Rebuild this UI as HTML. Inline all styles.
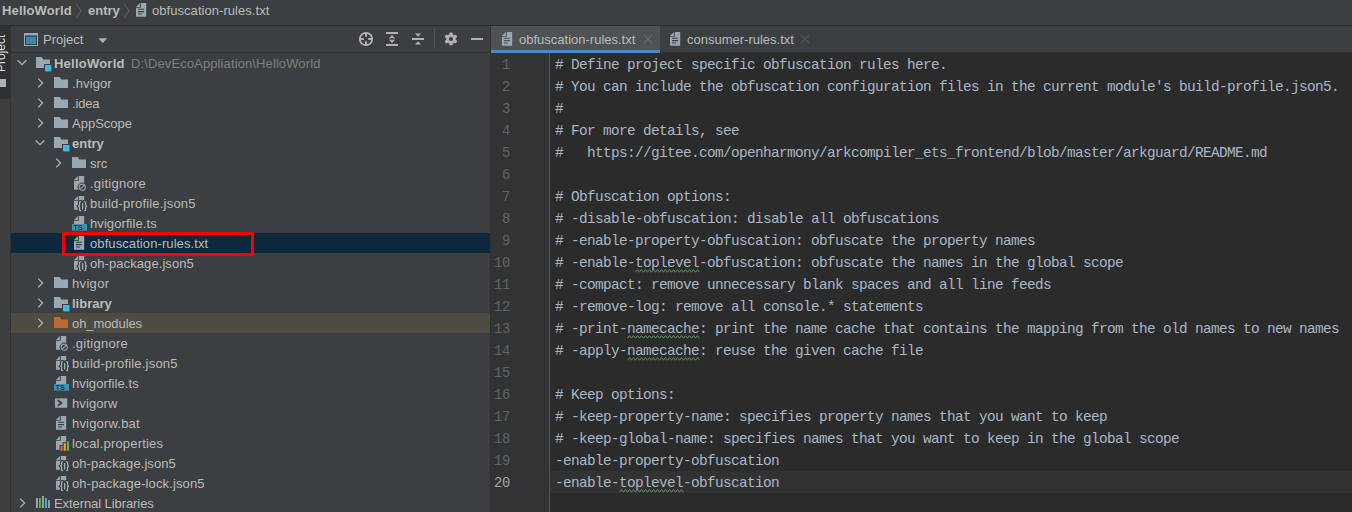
<!DOCTYPE html>
<html>
<head>
<meta charset="utf-8">
<title>obfuscation-rules.txt</title>
<style>
*{box-sizing:border-box;margin:0;padding:0}
html,body{width:1352px;height:512px;overflow:hidden;background:#3c3f41}
body{position:relative;font-family:"Liberation Sans",sans-serif;font-size:13px;color:#bbbbbb}
.abs{position:absolute}
#crumb{left:0;top:0;width:1352px;height:26px;background:#3c3f41;border-bottom:1px solid #2b2b2b}
#crumb span{position:absolute;top:0px;line-height:22px;white-space:nowrap}
#stripe{left:0;top:26px;width:11px;height:486px;background:#3c3f41;border-right:1px solid #323232;overflow:hidden}
#ptool{left:11px;top:26px;width:479px;height:27px;background:#3c3f41;border-bottom:1px solid #2f3133}
#tree{left:11px;top:53px;width:479px;height:459px;background:#3c3f41}
.row{position:absolute;left:0;width:479px;height:20px;line-height:20px;white-space:nowrap}
.row .t{position:absolute;top:1px}
.row svg{position:absolute}
.b{font-weight:bold}
.sel{background:#0d293e}
.excl{background:#4f4b41}
#tabs{left:490px;top:26px;width:862px;height:27px;background:#3c3f41;border-left:1px solid #323232;border-bottom:1px solid #323232}
#gutter{left:490px;top:53px;width:60px;border-left:1px solid #2d2f31;height:459px;background:#313335;border-right:1px solid #555555}
#edit{left:550px;top:53px;width:802px;height:459px;background:#2b2b2b}
.ln{position:absolute;left:0;width:59px;margin-top:2px;height:22px;line-height:22px;font-size:13.8px;letter-spacing:-0.28px;color:#606366;font-family:"Liberation Mono",monospace}
.cl{position:absolute;left:5px;height:22px;line-height:22px;font-size:14.4px;letter-spacing:-0.6359px;color:#a9b7c6;font-family:"Liberation Mono",monospace;white-space:pre}
</style>
</head>
<body>
<div id="crumb" class="abs">
<span class="b" style="left:2px;letter-spacing:0.14px">HelloWorld</span>
<svg class="abs" style="left:75px;top:3px" width="8" height="16" viewBox="0 0 8 16"><path d="M1.2 0.6 L6 7.8 L1.2 15" fill="none" stroke="#5e6163" stroke-width="1"/></svg>
<span class="b" style="left:88px">entry</span>
<svg class="abs" style="left:123px;top:3px" width="8" height="16" viewBox="0 0 8 16"><path d="M1.2 0.6 L6 7.8 L1.2 15" fill="none" stroke="#5e6163" stroke-width="1"/></svg>
<svg class="abs" style="left:136px;top:3px" width="16" height="16" viewBox="0 0 16 16"><path d="M4.8 0 H10.2 V13.8 H0 V4.8 H4.8 Z" fill="#9aa7b0" /><path d="M3.9 0 V3.9 H0 Z" fill="#9aa7b0"/><path d="M2 6.2 H8 M2 8.6 H8 M2 11 H6" stroke="#3c3f41" stroke-width="1.1" fill="none"/></svg>
<span style="left:152px;letter-spacing:0.05px">obfuscation-rules.txt</span>
</div>
<div id="stripe" class="abs">
<div class="abs" style="left:0;top:0;width:10px;height:73px;background:#2e3032"></div>
<div class="abs" style="left:-29px;top:9px;width:60px;height:14px;line-height:14px;transform:rotate(-90deg);transform-origin:center;color:#dddddd;font-size:12px;white-space:nowrap;text-align:left">Project</div>
<div class="abs" style="left:0;top:53px;width:6px;height:8px;background:#aab3ba"></div>
</div>
<div id="ptool" class="abs">
<svg class="abs" style="left:13px;top:7px" width="16" height="14" viewBox="0 0 16 14"><rect x="0.5" y="0.5" width="13" height="12" fill="#3c3f41" stroke="#9aa7b0" stroke-width="1"/><rect x="0" y="0" width="14" height="2.4" fill="#9aa7b0"/><rect x="2" y="3.8" width="10" height="7.2" fill="#3987aa"/></svg>
<span class="abs" style="left:32px;top:0;line-height:28px">Project</span>
<svg class="abs" style="left:87px;top:12px" width="10" height="6" viewBox="0 0 10 6"><path d="M0.4 0.3 H9.2 L4.8 5 Z" fill="#afb1b3"/></svg>
<svg class="abs" style="left:347px;top:5px" width="16" height="16" viewBox="0 0 16 16"><circle cx="8" cy="8" r="6.2" fill="none" stroke="#afb1b3" stroke-width="1.8"/><path d="M8 1 V5.8 M8 10.2 V15 M1 8 H5.8 M10.2 8 H15" stroke="#afb1b3" stroke-width="2"/></svg>
<svg class="abs" style="left:373px;top:5px" width="16" height="16" viewBox="0 0 16 16"><path d="M2 2 H14 M2 14 H14" stroke="#afb1b3" stroke-width="2"/><path d="M5 7.2 L8 4 L11 7.2 Z M5 8.8 L8 12 L11 8.8 Z" fill="#afb1b3"/></svg>
<svg class="abs" style="left:399px;top:5px" width="16" height="16" viewBox="0 0 16 16"><path d="M2 8 H14" stroke="#afb1b3" stroke-width="2"/><path d="M5 2.4 L8 5.8 L11 2.4 Z M5 13.6 L8 10.2 L11 13.6 Z" fill="#afb1b3"/></svg>
<div class="abs" style="left:423px;top:3px;width:1px;height:20px;background:#515456"></div>
<svg class="abs" style="left:432px;top:5px" width="16" height="16" viewBox="0 0 16 16"><g fill="#afb1b3"><circle cx="8" cy="8" r="4.8"/><rect x="6.4" y="1.5" width="3.2" height="13" rx="0.8"/><rect x="6.4" y="1.5" width="3.2" height="13" rx="0.8" transform="rotate(60 8 8)"/><rect x="6.4" y="1.5" width="3.2" height="13" rx="0.8" transform="rotate(120 8 8)"/></g><circle cx="8" cy="8" r="2.1" fill="#3c3f41"/></svg>
<div class="abs" style="left:460px;top:12px;width:12px;height:2px;background:#afb1b3"></div>
</div>
<div id="tree" class="abs">
<div class="row " style="top:0px"><svg style="left:5.300000000000001px;top:4px" width="12" height="11" viewBox="0 0 12 11"><path d="M1.6 3.2 L6 7.6 L10.4 3.2" fill="none" stroke="#afb1b3" stroke-width="1.3"/></svg><svg style="left:25px;top:4px" width="16" height="16" viewBox="0 0 16 16"><path d="M0 0 H5.6 L7.4 2.6 H14 V7 H8 V11 H0 Z" fill="#9aa7b0"/><rect x="9" y="8" width="6.4" height="6.4" fill="#40b6e0"/></svg><span class="t b" style="left:43px;letter-spacing:0.23px">HelloWorld</span><span class="t" style="left:120px;color:#7e7e7e;letter-spacing:0.11px">D:\DevEcoAppliation\HelloWorld</span></div>
<div class="row " style="top:20px"><svg style="left:23.799999999999997px;top:4px" width="11" height="12" viewBox="0 0 11 12"><path d="M3.2 1.6 L7.6 6 L3.2 10.4" fill="none" stroke="#afb1b3" stroke-width="1.3"/></svg><svg style="left:43px;top:4px" width="16" height="16" viewBox="0 0 16 16"><path d="M0 0 H5.6 L7.4 2.6 H14 V11 H0 Z" fill="#9aa7b0"/></svg><span class="t" style="left:61px;letter-spacing:0.1px">.hvigor</span></div>
<div class="row " style="top:40px"><svg style="left:23.799999999999997px;top:4px" width="11" height="12" viewBox="0 0 11 12"><path d="M3.2 1.6 L7.6 6 L3.2 10.4" fill="none" stroke="#afb1b3" stroke-width="1.3"/></svg><svg style="left:43px;top:4px" width="16" height="16" viewBox="0 0 16 16"><path d="M0 0 H5.6 L7.4 2.6 H14 V11 H0 Z" fill="#9aa7b0"/></svg><span class="t" style="left:61px;letter-spacing:-0.15px">.idea</span></div>
<div class="row " style="top:60px"><svg style="left:23.799999999999997px;top:4px" width="11" height="12" viewBox="0 0 11 12"><path d="M3.2 1.6 L7.6 6 L3.2 10.4" fill="none" stroke="#afb1b3" stroke-width="1.3"/></svg><svg style="left:43px;top:4px" width="16" height="16" viewBox="0 0 16 16"><path d="M0 0 H5.6 L7.4 2.6 H14 V11 H0 Z" fill="#9aa7b0"/></svg><span class="t" style="left:61px">AppScope</span></div>
<div class="row " style="top:80px"><svg style="left:23.299999999999997px;top:4px" width="12" height="11" viewBox="0 0 12 11"><path d="M1.6 3.2 L6 7.6 L10.4 3.2" fill="none" stroke="#afb1b3" stroke-width="1.3"/></svg><svg style="left:43px;top:4px" width="16" height="16" viewBox="0 0 16 16"><path d="M0 0 H5.6 L7.4 2.6 H14 V7 H8 V11 H0 Z" fill="#9aa7b0"/><rect x="9" y="8" width="6.4" height="6.4" fill="#40b6e0"/></svg><span class="t b" style="left:61px">entry</span></div>
<div class="row " style="top:100px"><svg style="left:41.8px;top:4px" width="11" height="12" viewBox="0 0 11 12"><path d="M3.2 1.6 L7.6 6 L3.2 10.4" fill="none" stroke="#afb1b3" stroke-width="1.3"/></svg><svg style="left:61px;top:4px" width="16" height="16" viewBox="0 0 16 16"><path d="M0 0 H5.6 L7.4 2.6 H14 V11 H0 Z" fill="#9aa7b0"/></svg><span class="t" style="left:79px">src</span></div>
<div class="row " style="top:120px"><svg style="left:63px;top:3px" width="16" height="16" viewBox="0 0 16 16"><path d="M4.8 0 H10.2 V13.8 H0 V4.8 H4.8 Z" fill="#9aa7b0" /><path d="M3.9 0 V3.9 H0 Z" fill="#9aa7b0"/><circle cx="8.2" cy="11.2" r="4.6" fill="#3c3f41"/><circle cx="8.2" cy="11.2" r="3.1" fill="none" stroke="#9aa7b0" stroke-width="1.1"/><path d="M6.1 13.3 L10.3 9.1" stroke="#9aa7b0" stroke-width="1.1"/></svg><span class="t" style="left:79px;letter-spacing:0.25px">.gitignore</span></div>
<div class="row " style="top:140px"><svg style="left:63px;top:3px" width="16" height="16" viewBox="0 0 16 16"><path d="M4.8 0 H10.2 V13.8 H0 V4.8 H4.8 Z" fill="#9aa7b0" /><path d="M3.9 0 V3.9 H0 Z" fill="#9aa7b0"/><path d="M7 5.6 H6.5 Q5.6 5.6 5.6 6.5 V9 Q5.6 10.1 4.2 10.1 Q5.6 10.1 5.6 11.2 V13.7 Q5.6 14.6 6.5 14.6 H7 M10.2 5.6 H10.7 Q11.6 5.6 11.6 6.5 V9 Q11.6 10.1 13 10.1 Q11.6 10.1 11.6 11.2 V13.7 Q11.6 14.6 10.7 14.6 H10.2" fill="none" stroke="#3c3f41" stroke-width="3.4" stroke-linejoin="round" stroke-linecap="round"/><rect x="6" y="4.6" width="5.2" height="11" fill="#3c3f41"/><path d="M7 5.6 H6.5 Q5.6 5.6 5.6 6.5 V9 Q5.6 10.1 4.2 10.1 Q5.6 10.1 5.6 11.2 V13.7 Q5.6 14.6 6.5 14.6 H7 M10.2 5.6 H10.7 Q11.6 5.6 11.6 6.5 V9 Q11.6 10.1 13 10.1 Q11.6 10.1 11.6 11.2 V13.7 Q11.6 14.6 10.7 14.6 H10.2 M8.6 7 V13.4" fill="none" stroke="#a3afb7" stroke-width="1.25"/></svg><span class="t" style="left:79px;letter-spacing:0.2px">build-profile.json5</span></div>
<div class="row " style="top:160px"><svg style="left:61px;top:3px;overflow:visible" width="18" height="16" viewBox="-2 0 18 16"><path d="M4.8 0 H10.2 V13.8 H0 V4.8 H4.8 Z" fill="#9aa7b0" /><path d="M3.9 0 V3.9 H0 Z" fill="#9aa7b0"/><rect x="-2" y="8" width="15" height="6.6" fill="#3b93b8"/><text x="4.2" y="13.9" font-family="Liberation Sans, sans-serif" font-size="7.2" font-weight="bold" fill="#1f343f" text-anchor="middle">TS</text></svg><span class="t" style="left:79px;letter-spacing:0.08px">hvigorfile.ts</span></div>
<div class="row sel" style="top:180px"><svg style="left:63px;top:3px" width="16" height="16" viewBox="0 0 16 16"><path d="M4.8 0 H10.2 V13.8 H0 V4.8 H4.8 Z" fill="#9aa7b0" /><path d="M3.9 0 V3.9 H0 Z" fill="#9aa7b0"/><path d="M2 6.2 H8 M2 8.6 H8 M2 11 H6" stroke="#3c3f41" stroke-width="1.1" fill="none"/></svg><span class="t" style="left:79px;letter-spacing:0.09px">obfuscation-rules.txt</span></div>
<div class="row " style="top:200px"><svg style="left:63px;top:3px" width="16" height="16" viewBox="0 0 16 16"><path d="M4.8 0 H10.2 V13.8 H0 V4.8 H4.8 Z" fill="#9aa7b0" /><path d="M3.9 0 V3.9 H0 Z" fill="#9aa7b0"/><path d="M7 5.6 H6.5 Q5.6 5.6 5.6 6.5 V9 Q5.6 10.1 4.2 10.1 Q5.6 10.1 5.6 11.2 V13.7 Q5.6 14.6 6.5 14.6 H7 M10.2 5.6 H10.7 Q11.6 5.6 11.6 6.5 V9 Q11.6 10.1 13 10.1 Q11.6 10.1 11.6 11.2 V13.7 Q11.6 14.6 10.7 14.6 H10.2" fill="none" stroke="#3c3f41" stroke-width="3.4" stroke-linejoin="round" stroke-linecap="round"/><rect x="6" y="4.6" width="5.2" height="11" fill="#3c3f41"/><path d="M7 5.6 H6.5 Q5.6 5.6 5.6 6.5 V9 Q5.6 10.1 4.2 10.1 Q5.6 10.1 5.6 11.2 V13.7 Q5.6 14.6 6.5 14.6 H7 M10.2 5.6 H10.7 Q11.6 5.6 11.6 6.5 V9 Q11.6 10.1 13 10.1 Q11.6 10.1 11.6 11.2 V13.7 Q11.6 14.6 10.7 14.6 H10.2 M8.6 7 V13.4" fill="none" stroke="#a3afb7" stroke-width="1.25"/></svg><span class="t" style="left:79px;letter-spacing:0.075px">oh-package.json5</span></div>
<div class="row " style="top:220px"><svg style="left:23.799999999999997px;top:4px" width="11" height="12" viewBox="0 0 11 12"><path d="M3.2 1.6 L7.6 6 L3.2 10.4" fill="none" stroke="#afb1b3" stroke-width="1.3"/></svg><svg style="left:43px;top:4px" width="16" height="16" viewBox="0 0 16 16"><path d="M0 0 H5.6 L7.4 2.6 H14 V11 H0 Z" fill="#9aa7b0"/></svg><span class="t" style="left:61px;letter-spacing:0.33px">hvigor</span></div>
<div class="row " style="top:240px"><svg style="left:23.799999999999997px;top:4px" width="11" height="12" viewBox="0 0 11 12"><path d="M3.2 1.6 L7.6 6 L3.2 10.4" fill="none" stroke="#afb1b3" stroke-width="1.3"/></svg><svg style="left:43px;top:4px" width="16" height="16" viewBox="0 0 16 16"><path d="M0 0 H5.6 L7.4 2.6 H14 V7 H8 V11 H0 Z" fill="#9aa7b0"/><rect x="9" y="8" width="6.4" height="6.4" fill="#40b6e0"/></svg><span class="t b" style="left:61px">library</span></div>
<div class="row excl" style="top:260px"><svg style="left:23.799999999999997px;top:4px" width="11" height="12" viewBox="0 0 11 12"><path d="M3.2 1.6 L7.6 6 L3.2 10.4" fill="none" stroke="#afb1b3" stroke-width="1.3"/></svg><svg style="left:43px;top:4px" width="16" height="16" viewBox="0 0 16 16"><path d="M0 0 H5.6 L7.4 2.6 H14 V11 H0 Z" fill="#c06a32"/></svg><span class="t" style="left:61px;letter-spacing:-0.08px">oh_modules</span></div>
<div class="row " style="top:280px"><svg style="left:45px;top:3px" width="16" height="16" viewBox="0 0 16 16"><path d="M4.8 0 H10.2 V13.8 H0 V4.8 H4.8 Z" fill="#9aa7b0" /><path d="M3.9 0 V3.9 H0 Z" fill="#9aa7b0"/><circle cx="8.2" cy="11.2" r="4.6" fill="#3c3f41"/><circle cx="8.2" cy="11.2" r="3.1" fill="none" stroke="#9aa7b0" stroke-width="1.1"/><path d="M6.1 13.3 L10.3 9.1" stroke="#9aa7b0" stroke-width="1.1"/></svg><span class="t" style="left:61px;letter-spacing:0.25px">.gitignore</span></div>
<div class="row " style="top:300px"><svg style="left:45px;top:3px" width="16" height="16" viewBox="0 0 16 16"><path d="M4.8 0 H10.2 V13.8 H0 V4.8 H4.8 Z" fill="#9aa7b0" /><path d="M3.9 0 V3.9 H0 Z" fill="#9aa7b0"/><path d="M7 5.6 H6.5 Q5.6 5.6 5.6 6.5 V9 Q5.6 10.1 4.2 10.1 Q5.6 10.1 5.6 11.2 V13.7 Q5.6 14.6 6.5 14.6 H7 M10.2 5.6 H10.7 Q11.6 5.6 11.6 6.5 V9 Q11.6 10.1 13 10.1 Q11.6 10.1 11.6 11.2 V13.7 Q11.6 14.6 10.7 14.6 H10.2" fill="none" stroke="#3c3f41" stroke-width="3.4" stroke-linejoin="round" stroke-linecap="round"/><rect x="6" y="4.6" width="5.2" height="11" fill="#3c3f41"/><path d="M7 5.6 H6.5 Q5.6 5.6 5.6 6.5 V9 Q5.6 10.1 4.2 10.1 Q5.6 10.1 5.6 11.2 V13.7 Q5.6 14.6 6.5 14.6 H7 M10.2 5.6 H10.7 Q11.6 5.6 11.6 6.5 V9 Q11.6 10.1 13 10.1 Q11.6 10.1 11.6 11.2 V13.7 Q11.6 14.6 10.7 14.6 H10.2 M8.6 7 V13.4" fill="none" stroke="#a3afb7" stroke-width="1.25"/></svg><span class="t" style="left:61px;letter-spacing:0.2px">build-profile.json5</span></div>
<div class="row " style="top:320px"><svg style="left:43px;top:3px;overflow:visible" width="18" height="16" viewBox="-2 0 18 16"><path d="M4.8 0 H10.2 V13.8 H0 V4.8 H4.8 Z" fill="#9aa7b0" /><path d="M3.9 0 V3.9 H0 Z" fill="#9aa7b0"/><rect x="-2" y="8" width="15" height="6.6" fill="#3b93b8"/><text x="4.2" y="13.9" font-family="Liberation Sans, sans-serif" font-size="7.2" font-weight="bold" fill="#1f343f" text-anchor="middle">TS</text></svg><span class="t" style="left:61px;letter-spacing:0.08px">hvigorfile.ts</span></div>
<div class="row " style="top:340px"><svg style="left:44px;top:5px" width="16" height="16" viewBox="0 0 16 16"><rect x="0" y="0.4" width="12.2" height="9.4" fill="#9aa7b0"/><path d="M2.8 2.3 L6.4 5 L2.8 7.7" fill="none" stroke="#3c3f41" stroke-width="1.8"/></svg><span class="t" style="left:61px;letter-spacing:0.1px">hvigorw</span></div>
<div class="row " style="top:360px"><svg style="left:45px;top:3px" width="16" height="16" viewBox="0 0 16 16"><path d="M4.8 0 H10.2 V13.8 H0 V4.8 H4.8 Z" fill="#9aa7b0" /><path d="M3.9 0 V3.9 H0 Z" fill="#9aa7b0"/><path d="M2 6.2 H8 M2 8.6 H8 M2 11 H6" stroke="#3c3f41" stroke-width="1.1" fill="none"/></svg><span class="t" style="left:61px;letter-spacing:0.18px">hvigorw.bat</span></div>
<div class="row " style="top:380px"><svg style="left:45px;top:3px" width="16" height="16" viewBox="0 0 16 16"><path d="M4.8 0 H10.2 V13.8 H0 V4.8 H4.8 Z" fill="#9aa7b0" /><path d="M3.9 0 V3.9 H0 Z" fill="#9aa7b0"/><path d="M3.6 15.5 V9 H6.7 V6.25 H9.8 V4.4 H15 V15.5 Z" fill="#3c3f41"/><rect x="4.6" y="10" width="2.1" height="4.75" fill="#e8623a"/><rect x="7.7" y="7.25" width="2.1" height="7.5" fill="#f2a03a"/><rect x="10.8" y="5.4" width="2.2" height="9.35" fill="#62b543"/></svg><span class="t" style="left:61px;letter-spacing:0.19px">local.properties</span></div>
<div class="row " style="top:400px"><svg style="left:45px;top:3px" width="16" height="16" viewBox="0 0 16 16"><path d="M4.8 0 H10.2 V13.8 H0 V4.8 H4.8 Z" fill="#9aa7b0" /><path d="M3.9 0 V3.9 H0 Z" fill="#9aa7b0"/><path d="M7 5.6 H6.5 Q5.6 5.6 5.6 6.5 V9 Q5.6 10.1 4.2 10.1 Q5.6 10.1 5.6 11.2 V13.7 Q5.6 14.6 6.5 14.6 H7 M10.2 5.6 H10.7 Q11.6 5.6 11.6 6.5 V9 Q11.6 10.1 13 10.1 Q11.6 10.1 11.6 11.2 V13.7 Q11.6 14.6 10.7 14.6 H10.2" fill="none" stroke="#3c3f41" stroke-width="3.4" stroke-linejoin="round" stroke-linecap="round"/><rect x="6" y="4.6" width="5.2" height="11" fill="#3c3f41"/><path d="M7 5.6 H6.5 Q5.6 5.6 5.6 6.5 V9 Q5.6 10.1 4.2 10.1 Q5.6 10.1 5.6 11.2 V13.7 Q5.6 14.6 6.5 14.6 H7 M10.2 5.6 H10.7 Q11.6 5.6 11.6 6.5 V9 Q11.6 10.1 13 10.1 Q11.6 10.1 11.6 11.2 V13.7 Q11.6 14.6 10.7 14.6 H10.2 M8.6 7 V13.4" fill="none" stroke="#a3afb7" stroke-width="1.25"/></svg><span class="t" style="left:61px;letter-spacing:0.075px">oh-package.json5</span></div>
<div class="row " style="top:420px"><svg style="left:45px;top:3px" width="16" height="16" viewBox="0 0 16 16"><path d="M4.8 0 H10.2 V13.8 H0 V4.8 H4.8 Z" fill="#9aa7b0" /><path d="M3.9 0 V3.9 H0 Z" fill="#9aa7b0"/><path d="M7 5.6 H6.5 Q5.6 5.6 5.6 6.5 V9 Q5.6 10.1 4.2 10.1 Q5.6 10.1 5.6 11.2 V13.7 Q5.6 14.6 6.5 14.6 H7 M10.2 5.6 H10.7 Q11.6 5.6 11.6 6.5 V9 Q11.6 10.1 13 10.1 Q11.6 10.1 11.6 11.2 V13.7 Q11.6 14.6 10.7 14.6 H10.2" fill="none" stroke="#3c3f41" stroke-width="3.4" stroke-linejoin="round" stroke-linecap="round"/><rect x="6" y="4.6" width="5.2" height="11" fill="#3c3f41"/><path d="M7 5.6 H6.5 Q5.6 5.6 5.6 6.5 V9 Q5.6 10.1 4.2 10.1 Q5.6 10.1 5.6 11.2 V13.7 Q5.6 14.6 6.5 14.6 H7 M10.2 5.6 H10.7 Q11.6 5.6 11.6 6.5 V9 Q11.6 10.1 13 10.1 Q11.6 10.1 11.6 11.2 V13.7 Q11.6 14.6 10.7 14.6 H10.2 M8.6 7 V13.4" fill="none" stroke="#a3afb7" stroke-width="1.25"/></svg><span class="t" style="left:61px;letter-spacing:0.12px">oh-package-lock.json5</span></div>
<div class="row " style="top:440px"><svg style="left:5.800000000000001px;top:4px" width="11" height="12" viewBox="0 0 11 12"><path d="M3.2 1.6 L7.6 6 L3.2 10.4" fill="none" stroke="#afb1b3" stroke-width="1.3"/></svg><svg style="left:25px;top:2px" width="16" height="16" viewBox="0 0 16 16"><rect x="0" y="3" width="1.9" height="10" fill="#9aa7b0"/><rect x="3" y="3" width="1.9" height="10" fill="#62b543"/><rect x="6" y="1" width="1.9" height="12" fill="#9aa7b0"/><rect x="9" y="3" width="1.9" height="10" fill="#40b6e0"/><rect x="12" y="5.2" width="1.9" height="7.8" fill="#9aa7b0"/></svg><span class="t" style="left:43px;letter-spacing:-0.08px">External Libraries</span></div>
<div class="abs" style="left:51px;top:179px;width:192px;height:24px;border:3px solid #f80000"></div>
</div>
<div id="tabs" class="abs">
<div class="abs" style="left:0;top:0;width:169px;height:24px;background:#4e5254"></div>
<div class="abs" style="left:0;top:24px;width:169px;height:3px;background:#4a88c7"></div>
<svg class="abs" style="left:11px;top:6px" width="16" height="16" viewBox="0 0 16 16"><path d="M4.8 0 H10.2 V13.8 H0 V4.8 H4.8 Z" fill="#9aa7b0" /><path d="M3.9 0 V3.9 H0 Z" fill="#9aa7b0"/><path d="M2 6.2 H8 M2 8.6 H8 M2 11 H6" stroke="#4e5254" stroke-width="1.1" fill="none"/></svg>
<span class="abs" style="left:28px;top:0;line-height:27px;white-space:nowrap">obfuscation-rules.txt</span>
<svg class="abs" style="left:152px;top:8px" width="10" height="10" viewBox="0 0 10 10"><path d="M1 1 L9 9 M9 1 L1 9" stroke="#6e7274" stroke-width="1"/></svg>
<svg class="abs" style="left:179px;top:6px" width="16" height="16" viewBox="0 0 16 16"><path d="M4.8 0 H10.2 V13.8 H0 V4.8 H4.8 Z" fill="#9aa7b0" /><path d="M3.9 0 V3.9 H0 Z" fill="#9aa7b0"/><path d="M2 6.2 H8 M2 8.6 H8 M2 11 H6" stroke="#3c3f41" stroke-width="1.1" fill="none"/></svg>
<span class="abs" style="left:196px;top:0;line-height:27px;white-space:nowrap">consumer-rules.txt</span>
<svg class="abs" style="left:309px;top:8px" width="10" height="10" viewBox="0 0 10 10"><path d="M1 1 L9 9 M9 1 L1 9" stroke="#5b5f61" stroke-width="1"/></svg>
</div>
<div id="gutter" class="abs">
<div class="ln" style="top:0px;color:#606366"><span style="position:absolute;right:40px">1</span></div>
<div class="ln" style="top:22px;color:#606366"><span style="position:absolute;right:40px">2</span></div>
<div class="ln" style="top:44px;color:#606366"><span style="position:absolute;right:40px">3</span></div>
<div class="ln" style="top:66px;color:#606366"><span style="position:absolute;right:40px">4</span></div>
<div class="ln" style="top:88px;color:#606366"><span style="position:absolute;right:40px">5</span></div>
<div class="ln" style="top:110px;color:#606366"><span style="position:absolute;right:40px">6</span></div>
<div class="ln" style="top:132px;color:#606366"><span style="position:absolute;right:40px">7</span></div>
<div class="ln" style="top:154px;color:#606366"><span style="position:absolute;right:40px">8</span></div>
<div class="ln" style="top:176px;color:#606366"><span style="position:absolute;right:40px">9</span></div>
<div class="ln" style="top:198px;color:#606366"><span style="position:absolute;right:40px">10</span></div>
<div class="ln" style="top:220px;color:#606366"><span style="position:absolute;right:40px">11</span></div>
<div class="ln" style="top:242px;color:#606366"><span style="position:absolute;right:40px">12</span></div>
<div class="ln" style="top:264px;color:#606366"><span style="position:absolute;right:40px">13</span></div>
<div class="ln" style="top:286px;color:#606366"><span style="position:absolute;right:40px">14</span></div>
<div class="ln" style="top:308px;color:#606366"><span style="position:absolute;right:40px">15</span></div>
<div class="ln" style="top:330px;color:#606366"><span style="position:absolute;right:40px">16</span></div>
<div class="ln" style="top:352px;color:#606366"><span style="position:absolute;right:40px">17</span></div>
<div class="ln" style="top:374px;color:#606366"><span style="position:absolute;right:40px">18</span></div>
<div class="ln" style="top:396px;color:#606366"><span style="position:absolute;right:40px">19</span></div>
<div class="ln" style="top:418px;color:#a4a3a3"><span style="position:absolute;right:40px">20</span></div>
</div>
<div id="edit" class="abs">
<div class="abs" style="left:0;top:418px;width:802px;height:22px;background:#323232"></div>
<div class="cl" style="top:1px"># Define project specific obfuscation rules here.</div>
<div class="cl" style="top:23px"># You can include the obfuscation configuration files in the current module's build-profile.json5.</div>
<div class="cl" style="top:45px">#</div>
<div class="cl" style="top:67px"># For more details, see</div>
<div class="cl" style="top:89px">#   https://gitee.com/openharmony/arkcompiler_ets_frontend/blob/master/arkguard/README.md</div>
<div class="cl" style="top:133px"># Obfuscation options:</div>
<div class="cl" style="top:155px"># -disable-obfuscation: disable all obfuscations</div>
<div class="cl" style="top:177px"># -enable-property-obfuscation: obfuscate the property names</div>
<svg class="abs" style="left:84.5px;top:216px" width="66" height="5" viewBox="0 0 66 5"><polyline points="0.5,3.2 2.5,0.6 4.5,3.2 6.5,0.6 8.5,3.2 10.5,0.6 12.5,3.2 14.5,0.6 16.5,3.2 18.5,0.6 20.5,3.2 22.5,0.6 24.5,3.2 26.5,0.6 28.5,3.2 30.5,0.6 32.5,3.2 34.5,0.6 36.5,3.2 38.5,0.6 40.5,3.2 42.5,0.6 44.5,3.2 46.5,0.6 48.5,3.2 50.5,0.6 52.5,3.2 54.5,0.6 56.5,3.2 58.5,0.6 60.5,3.2 62.5,0.6 64.5,3.2" fill="none" stroke="#5f9465" stroke-width="1" stroke-linejoin="miter"/></svg>
<div class="cl" style="top:199px"># -enable-toplevel-obfuscation: obfuscate the names in the global scope</div>
<div class="cl" style="top:221px"># -compact: remove unnecessary blank spaces and all line feeds</div>
<div class="cl" style="top:243px"># -remove-log: remove all console.* statements</div>
<svg class="abs" style="left:76.5px;top:282px" width="74" height="5" viewBox="0 0 74 5"><polyline points="0.5,3.2 2.5,0.6 4.5,3.2 6.5,0.6 8.5,3.2 10.5,0.6 12.5,3.2 14.5,0.6 16.5,3.2 18.5,0.6 20.5,3.2 22.5,0.6 24.5,3.2 26.5,0.6 28.5,3.2 30.5,0.6 32.5,3.2 34.5,0.6 36.5,3.2 38.5,0.6 40.5,3.2 42.5,0.6 44.5,3.2 46.5,0.6 48.5,3.2 50.5,0.6 52.5,3.2 54.5,0.6 56.5,3.2 58.5,0.6 60.5,3.2 62.5,0.6 64.5,3.2 66.5,0.6 68.5,3.2 70.5,0.6 72.5,3.2" fill="none" stroke="#5f9465" stroke-width="1" stroke-linejoin="miter"/></svg>
<div class="cl" style="top:265px"># -print-namecache: print the name cache that contains the mapping from the old names to new names</div>
<svg class="abs" style="left:76.5px;top:304px" width="74" height="5" viewBox="0 0 74 5"><polyline points="0.5,3.2 2.5,0.6 4.5,3.2 6.5,0.6 8.5,3.2 10.5,0.6 12.5,3.2 14.5,0.6 16.5,3.2 18.5,0.6 20.5,3.2 22.5,0.6 24.5,3.2 26.5,0.6 28.5,3.2 30.5,0.6 32.5,3.2 34.5,0.6 36.5,3.2 38.5,0.6 40.5,3.2 42.5,0.6 44.5,3.2 46.5,0.6 48.5,3.2 50.5,0.6 52.5,3.2 54.5,0.6 56.5,3.2 58.5,0.6 60.5,3.2 62.5,0.6 64.5,3.2 66.5,0.6 68.5,3.2 70.5,0.6 72.5,3.2" fill="none" stroke="#5f9465" stroke-width="1" stroke-linejoin="miter"/></svg>
<div class="cl" style="top:287px"># -apply-namecache: reuse the given cache file</div>
<div class="cl" style="top:331px"># Keep options:</div>
<div class="cl" style="top:353px"># -keep-property-name: specifies property names that you want to keep</div>
<div class="cl" style="top:375px"># -keep-global-name: specifies names that you want to keep in the global scope</div>
<div class="cl" style="top:397px">-enable-property-obfuscation</div>
<svg class="abs" style="left:68.5px;top:436px" width="66" height="5" viewBox="0 0 66 5"><polyline points="0.5,3.2 2.5,0.6 4.5,3.2 6.5,0.6 8.5,3.2 10.5,0.6 12.5,3.2 14.5,0.6 16.5,3.2 18.5,0.6 20.5,3.2 22.5,0.6 24.5,3.2 26.5,0.6 28.5,3.2 30.5,0.6 32.5,3.2 34.5,0.6 36.5,3.2 38.5,0.6 40.5,3.2 42.5,0.6 44.5,3.2 46.5,0.6 48.5,3.2 50.5,0.6 52.5,3.2 54.5,0.6 56.5,3.2 58.5,0.6 60.5,3.2 62.5,0.6 64.5,3.2" fill="none" stroke="#5f9465" stroke-width="1" stroke-linejoin="miter"/></svg>
<div class="cl" style="top:419px">-enable-toplevel-obfuscation</div>
</div>
</body>
</html>
